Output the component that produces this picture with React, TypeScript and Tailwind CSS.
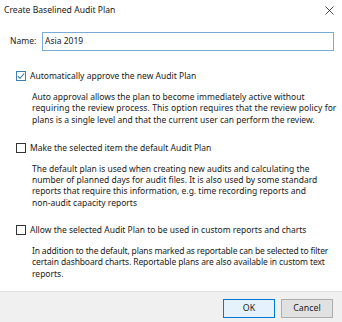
import React from "react";

function Check({ checked }: { checked?: boolean }) {
  return (
    <div
      className={
        "w-[10px] h-[10px] border flex items-center justify-center bg-white shrink-0 " +
        (checked ? "border-[#3f7fb8]" : "border-[#333333]")
      }
    >
      {checked && (
        <svg width="8" height="8" viewBox="0 0 8 8">
          <path d="M0.8 4.1 L3 6.3 L7.2 1.5" fill="none" stroke="#2f6fa8" strokeWidth="1.1" />
        </svg>
      )}
    </div>
  );
}

type Line = { t: string; ls?: string };

function Option({
  checked,
  label,
  lines,
  className,
}: {
  checked?: boolean;
  label: string;
  lines: Line[];
  className?: string;
}) {
  return (
    <div className={className}>
      <div className="flex items-center pl-[16px] h-[12px]">
        <Check checked={checked} />
        <span className="ml-[4px]">{label}</span>
      </div>
      <div className="pl-[32px] mt-[9px] leading-[11.3px]">
        {lines.map((l, i) => (
          <div key={i} className={"whitespace-nowrap " + (l.ls ?? "")}>
            {l.t}
          </div>
        ))}
      </div>
    </div>
  );
}

export default function App() {
  return (
    <div
      className="w-[342px] h-[322px] bg-white flex flex-col text-[#1a1a1a] text-[8.5px] overflow-hidden"
      style={{ fontFamily: "'Noto Sans', sans-serif" }}
    >
      <div className="h-[20px] flex items-center justify-between pl-[4px] pr-[8px] pt-[1px] text-[8.6px]">
        <span>Create Baselined Audit Plan</span>
        <svg width="9" height="9" viewBox="0 0 9 9">
          <path d="M0.5 0.5 L8.5 8.5 M8.5 0.5 L0.5 8.5" stroke="#333" strokeWidth="0.9" />
        </svg>
      </div>
      <div className="flex items-center mt-[12px] pl-[10px]">
        <span className="w-[32px]">Name:</span>
        <div className="w-[292px] h-[19px] border border-[#7aaad6] flex items-center px-[2px]">
          Asia 2019
        </div>
      </div>
      <Option
        className="mt-[19px]"
        checked
        label="Automatically approve the new Audit Plan"
        lines={[
          { t: "Auto approval allows the plan to become immediately active without" },
          { t: "requiring the review process. This option requires that the review policy for", ls: "tracking-[0.08px]" },
          { t: "plans is a single level and that the current user can perform the review." },
        ]}
      />
      <Option
        className="mt-[17px]"
        label="Make the selected item the default Audit Plan"
        lines={[
          { t: "The default plan is used when creating new audits and calculating the" },
          { t: "number of planned days for audit files. It is also used by some standard" },
          { t: "reports that require this information, e.g. time recording reports and" },
          { t: "non-audit capacity reports" },
        ]}
      />
      <Option
        className="mt-[16px]"
        label="Allow the selected Audit Plan to be used in custom reports and charts"
        lines={[
          { t: "In addition to the default, plans marked as reportable can be selected to filter", ls: "tracking-[-0.16px]" },
          { t: "certain dashboard charts. Reportable plans are also available in custom text", ls: "tracking-[-0.12px]" },
          { t: "reports." },
        ]}
      />
      <div className="flex-1" />
      <div className="h-[31px] border-t border-[#dfdfdf] bg-[#f0f0f0] flex items-start justify-end gap-[6px] pt-[7px] pr-[9px]">
        <button className="w-[52px] h-[19px] border border-[#0078d7] bg-[#e5f1fb] text-[8.8px]">OK</button>
        <button className="w-[52px] h-[19px] border border-[#adadad] bg-[#e1e1e1] text-[8.8px]">Cancel</button>
      </div>
    </div>
  );
}
